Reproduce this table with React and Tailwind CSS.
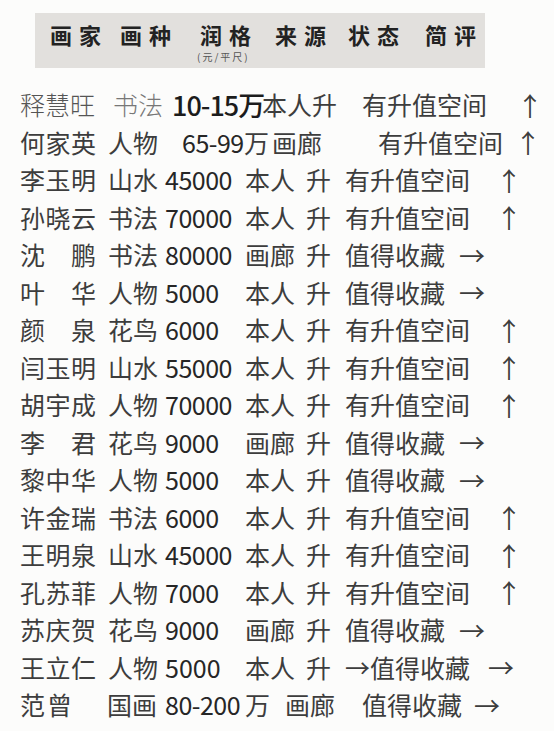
import React from 'react';

const FONT = { fontFamily: '"Noto Sans CJK SC", "Noto Sans", sans-serif' };

const UP = '有升值空间';
const FLAT = '值得收藏';

// name, category, price, source, rating ('up' | 'flat')
const ROWS = [
    ['李玉明', '山水', '45000', '本人', 'up'],
    ['孙晓云', '书法', '70000', '本人', 'up'],
    ['沈鹏', '书法', '80000', '画廊', 'flat'],
    ['叶华', '人物', '5000', '本人', 'flat'],
    ['颜泉', '花鸟', '6000', '本人', 'up'],
    ['闫玉明', '山水', '55000', '本人', 'up'],
    ['胡宇成', '人物', '70000', '本人', 'up'],
    ['李君', '花鸟', '9000', '画廊', 'flat'],
    ['黎中华', '人物', '5000', '本人', 'flat'],
    ['许金瑞', '书法', '6000', '本人', 'up'],
    ['王明泉', '山水', '45000', '本人', 'up'],
    ['孔苏菲', '人物', '7000', '本人', 'up'],
    ['苏庆贺', '花鸟', '9000', '画廊', 'flat'],
];

const Name = ({ text }) => (
    <div className="w-[88px] shrink-0">
        <div className="w-[76px] flex justify-between">
            {text.split('').map((c, i) => <span key={i}>{c}</span>)}
        </div>
    </div>
);

const Row = ({ children }) => (
    <div className="h-[37.5px] flex items-center pl-[20px] text-[25px] text-[#3d3d3d] leading-none whitespace-nowrap">
        {children}
    </div>
);

const StdRow = ({ row }) => {
    const [name, cat, price, src, kind] = row;
    return (
        <Row>
            <Name text={name} />
            <div className="w-[57px] shrink-0">{cat}</div>
            <div className="w-[80px] shrink-0 text-[#262626] tracking-[-0.5px]">{price}</div>
            <div className="w-[61px] shrink-0">{src}</div>
            <div className="w-[39px] shrink-0">升</div>
            <div className="shrink-0">{kind === 'up' ? UP : FLAT}</div>
            {kind === 'up'
                ? <div className="ml-[26px] text-[26px]">↑</div>
                : <div className="ml-[14px] text-[26px]">→</div>}
        </Row>
    );
};

export default function App() {
    return (
        <div className="w-[554px] h-[731px] bg-[#fcfcfb] overflow-hidden" style={FONT}>
            {/* header band */}
            <div className="pt-[13px] pl-[35px]">
                <div className="w-[450px] h-[55px] bg-[#e2e0dd] flex pl-[15px] pt-[10px] text-[22px] font-bold text-[#222] leading-none">
                    <div className="w-[70px] tracking-[7px]">画家</div>
                    <div className="w-[80px] tracking-[7px]">画种</div>
                    <div className="w-[75px] flex flex-col items-start">
                        <span className="tracking-[7px]">润格</span>
                        <span className="mt-[7px] ml-[-3px] text-[10px] leading-none font-normal text-[#555] tracking-[2px]">(元/平尺)</span>
                    </div>
                    <div className="w-[73px] tracking-[7px]">来源</div>
                    <div className="w-[77px] tracking-[7px]">状态</div>
                    <div className="tracking-[7px]">简评</div>
                </div>
            </div>

            <div className="pt-[18px]">
                {/* row 1 */}
                <Row>
                    <div className="w-[93px] shrink-0 text-[#555] font-light">释慧旺</div>
                    <div className="w-[59px] shrink-0 text-[#777] font-light">书法</div>
                    <div className="w-[90px] shrink-0 text-[27px] text-[#1c1c1c] font-medium tracking-[-1px]">10-15万</div>
                    <div className="w-[100px] shrink-0">本人升</div>
                    <div className="shrink-0">{UP}</div>
                    <div className="ml-[30px] text-[26px]">↑</div>
                </Row>
                {/* row 2 */}
                <Row>
                    <Name text="何家英" />
                    <div className="w-[74px] shrink-0">人物</div>
                    <div className="w-[62px] shrink-0 text-[#262626] tracking-[-0.5px]">65-99</div>
                    <div className="w-[28px] shrink-0">万</div>
                    <div className="w-[106px] shrink-0">画廊</div>
                    <div className="shrink-0">{UP}</div>
                    <div className="ml-[12px] text-[26px]">↑</div>
                </Row>
                {ROWS.map((r) => <StdRow key={r[0]} row={r} />)}
                {/* row 16 */}
                <Row>
                    <Name text="王立仁" />
                    <div className="w-[57px] shrink-0">人物</div>
                    <div className="w-[80px] shrink-0 text-[#262626]">5000</div>
                    <div className="w-[61px] shrink-0">本人</div>
                    <div className="w-[39px] shrink-0">升</div>
                    <div className="shrink-0">→{FLAT}</div>
                    <div className="ml-[18px] text-[26px]">→</div>
                </Row>
                {/* row 17 */}
                <Row>
                    <div className="w-[87px] shrink-0 tracking-[2px]">范曾</div>
                    <div className="w-[58px] shrink-0">国画</div>
                    <div className="w-[80px] shrink-0 text-[#262626] tracking-[-0.5px]">80-200</div>
                    <div className="w-[40px] shrink-0">万</div>
                    <div className="w-[77px] shrink-0">画廊</div>
                    <div className="shrink-0">{FLAT}</div>
                    <div className="ml-[12px] text-[26px]">→</div>
                </Row>
            </div>
        </div>
    );
}
